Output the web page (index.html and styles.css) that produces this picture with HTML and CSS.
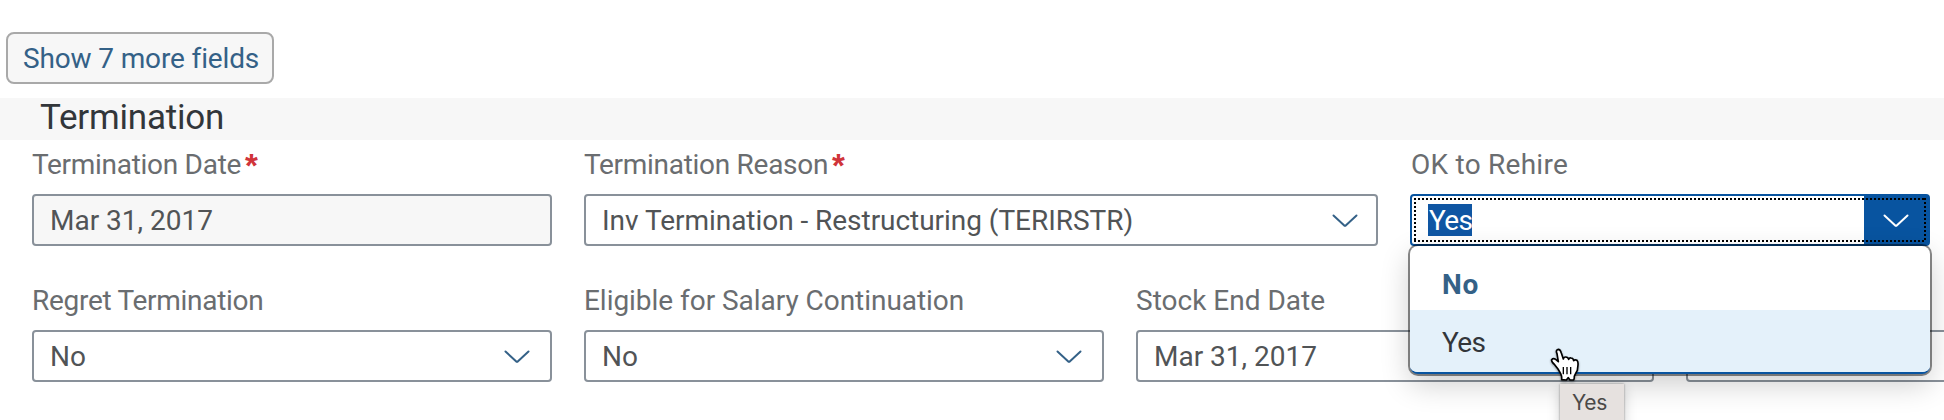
FILE: index.html
```html
<!DOCTYPE html>
<html lang="en">
<head>
<meta charset="utf-8">
<title>Termination</title>
<link rel="stylesheet" href="styles.css">
</head>
<body>
<main class="page">
  <button class="more" type="button"><span class="t-more">Show 7 more fields</span></button>
  <h2 class="section-title">Termination</h2>
  <section class="rows">
    <div class="row">
      <div class="field">
        <div class="label"><span class="t-term">Termination Date</span><b class="req">*</b></div>
        <div class="control readonly"><span>Mar 31, 2017</span></div>
      </div>
      <div class="field wide">
        <div class="label"><span class="t-term">Termination Reason</span><b class="req">*</b></div>
        <div class="control"><span class="t-inv">Inv Termination - Restructuring (TERIRSTR)</span>
          <svg class="chevron" viewBox="0 0 26 14"><path d="M1.5 1.5L12 11.2Q13 12.2 14 11.2L24.5 1.5"/></svg></div>
      </div>
      <div class="field">
        <div class="label"><span class="t-ok">OK to Rehire</span></div>
        <div class="control open">
          <span class="selected">Yes</span>
          <span class="toggle"><svg class="chevron" viewBox="0 0 26 14"><path d="M1.5 1.5L12 11.2Q13 12.2 14 11.2L24.5 1.5"/></svg></span>
          <i class="focus-ring"></i>
          <div class="menu">
            <div class="option current">No</div>
            <div class="option hover">Yes</div>
          </div>
        </div>
      </div>
    </div>
    <div class="row">
      <div class="field">
        <div class="label"><span class="t-term">Regret Termination</span></div>
        <div class="control"><span>No</span>
          <svg class="chevron" viewBox="0 0 26 14"><path d="M1.5 1.5L12 11.2Q13 12.2 14 11.2L24.5 1.5"/></svg></div>
      </div>
      <div class="field">
        <div class="label"><span class="t-inv">Eligible for Salary Continuation</span></div>
        <div class="control"><span>No</span>
          <svg class="chevron" viewBox="0 0 26 14"><path d="M1.5 1.5L12 11.2Q13 12.2 14 11.2L24.5 1.5"/></svg></div>
      </div>
      <div class="field stock">
        <div class="label"><span>Stock End Date</span></div>
        <div class="control"><span>Mar 31, 2017</span></div>
      </div>
      <div class="field">
        <div class="label"></div>
        <div class="control"></div>
      </div>
    </div>
  </section>
  <div class="tooltip">Yes</div>
  <svg class="cursor" viewBox="0 0 110 110">
    <path d="M30 66L20 53Q9 43 11 38Q16 32 24 38L31 44L27 20Q22 9 31 7Q37 7 40 18L46 36Q47 30 53 30Q60 30 62 37Q64 32 69 33Q76 34 77 41Q81 37 87 40Q91 44 90 54L88 70Q82 80 79 88Q79 97 77 99L66 99L61 92L55 99L41 98Q42 88 38 80Z"/>
    <path class="lines" d="M46 60V82M57 60V82M68 60V82"/>
  </svg>
</main>
</body>
</html>
```
FILE: styles.css
```css
* { box-sizing: border-box; }
body { margin: 0; background: #fff; font-family: Roboto, "Noto Sans", sans-serif; font-size: 28px; color: #515456; }
.page { position: relative; width: 1944px; height: 420px; overflow: hidden; padding-top: 32px; }
.more { display: block; width: 268px; height: 52px; margin: 0 0 14px 6px; padding: 0 0 0 15px; border: 2px solid #a9a9a9; border-radius: 8px; background: #f7f7f7; color: #346187; font: inherit; line-height: 50px; text-align: left; white-space: nowrap; }
.t-more { letter-spacing: -.14px; }
.section-title { margin: 0; height: 42px; padding-left: 40px; background: #f7f7f7; color: #32363a; font-size: 35px; font-weight: 400; line-height: 40px; letter-spacing: -.2px; }
.t-term { letter-spacing: -.29px; }
.t-inv { letter-spacing: -.04px; }
.t-ok { padding-left: 1px; letter-spacing: .25px; }
.rows { display: flex; flex-direction: column; gap: 38px; padding: 8px 0 0 32px; }
.row { display: flex; gap: 32px; }
.field { flex: 0 0 520px; display: flex; flex-direction: column; gap: 14px; }
.field.wide { flex-basis: 794px; }
.field.stock { flex-basis: 518px; }
.label { display: flex; gap: 4px; height: 32px; line-height: 34px; color: #6a6d70; white-space: nowrap; }
.req { color: #d0343a; font-family: "Liberation Sans", sans-serif; font-size: 33px; line-height: 36px; }
.control { position: relative; display: flex; align-items: center; justify-content: space-between; height: 52px; padding: 0 20px 0 16px; border: 2px solid #89919a; border-radius: 4px; background: #fff; line-height: 50px; white-space: nowrap; }
.control > span { height: 48px; }
.control.readonly { background: #f7f7f7; }
.chevron { width: 26px; height: 14px; margin-top: 2px; fill: none; stroke: #346187; stroke-width: 2; stroke-linecap: round; }
.wide .chevron { margin-right: -1.5px; }
.control.open { border-color: #0854a0; padding: 0 0 0 16px; }
.control > .selected { background: #0f56a3; color: #fff; width: 44px; height: 32px; line-height: 33px; padding-left: 1px; letter-spacing: -.7px; }
.toggle { display: flex; align-items: center; justify-content: center; width: 64px; height: 48px; background: #0854a0; }
.toggle .chevron { stroke: #fff; }
.focus-ring { position: absolute; inset: 2px;
  background:
    repeating-linear-gradient(90deg, #000 0 2px, transparent 2px 4px) 0 0 / 100% 2px no-repeat,
    repeating-linear-gradient(90deg, #000 0 2px, transparent 2px 4px) 0 100% / 100% 2px no-repeat,
    repeating-linear-gradient(#000 0 2px, transparent 2px 4px) 0 0 / 2px 100% no-repeat,
    repeating-linear-gradient(#000 0 2px, transparent 2px 4px) 100% 0 / 2px 100% no-repeat; }
.menu { position: absolute; left: -2px; top: 50px; z-index: 2; width: 520px; height: 128px; border-radius: 8px; border-bottom: 2px solid #0854a0; background: #fff; overflow: hidden; box-shadow: 0 0 0 2px rgba(0,0,0,.46), 0 10px 30px rgba(0,0,0,.2); }
.option { padding-left: 32px; line-height: 52px; }
.current { height: 64px; padding-top: 13px; color: #346187; font-weight: 700; letter-spacing: .8px; }
.hover { height: 62px; padding-top: 7px; background: #e4f1fa; color: #32363a; letter-spacing: -.7px; }
.tooltip { position: absolute; left: 1560px; top: 384px; z-index: 3; width: 64px; height: 40px; padding-left: 12px; background: #e6e1df; color: #4b4948; font: 21px/38px Inter, sans-serif; letter-spacing: -.3px; box-shadow: 0 0 2px rgba(0,0,0,.4), 0 4px 12px rgba(0,0,0,.2); }
.cursor { position: absolute; left: 1548px; top: 347px; z-index: 4; width: 36.67px; height: 36.67px; fill: #fff; stroke: #000; stroke-width: 5; stroke-linejoin: round; filter: drop-shadow(0 1px 1px rgba(0,0,0,.4)); }
.lines { stroke-width: 4; }
```
